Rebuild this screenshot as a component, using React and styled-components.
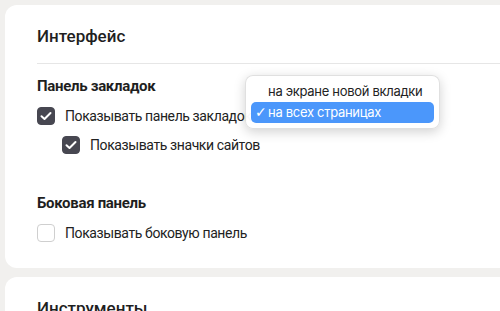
import React from 'react'
import styled, { createGlobalStyle } from 'styled-components'

const GlobalStyle = createGlobalStyle`
  html, body {
    margin: 0;
    padding: 0;
    background: #f1f0ee;
    overflow: hidden;
  }
  body {
    font-family: Roboto, "Noto Sans", sans-serif;
    color: #1f1f1f;
  }
`

const Page = styled.div`
  padding: 5px 0 0 5px;
  display: flex;
  flex-direction: column;
  gap: 9px;
`

const Card = styled.section`
  position: relative;
  width: 540px;
  background: #fff;
  border-radius: 12px;
  padding: 19px 0 21px 32px;
  box-sizing: border-box;
`

const Title = styled.h2`
  margin: 0;
  font-size: 17px;
  line-height: 24px;
  font-weight: 500;
  padding-bottom: 15px;
  border-bottom: 1px solid #e6e6e6;
`

const Section = styled.div`
  margin-top: ${props => props.first ? '12px' : '34px'};
`

const SectionTitle = styled.h3`
  margin: 0 0 5px;
  font-size: 15px;
  line-height: 20px;
  font-weight: 700;
  letter-spacing: -0.3px;
`

const Row = styled.label`
  display: flex;
  align-items: center;
  gap: 10px;
  height: 29px;
  padding-left: ${props => props.nested ? '25px' : '0'};
  font-size: 14px;
  letter-spacing: -0.4px;
  color: #222;
`

const Box = styled.span`
  width: 18px;
  height: 18px;
  box-sizing: border-box;
  border-radius: 4px;
  display: flex;
  align-items: center;
  justify-content: center;
  background: ${props => props.checked ? '#474751' : '#fff'};
  border: 1px solid ${props => props.checked ? '#474751' : '#cfcfcf'};
`

const Menu = styled.div`
  position: absolute;
  left: 240px;
  top: 70px;
  width: 195px;
  box-sizing: border-box;
  padding: 5px;
  background: rgba(255, 255, 255, 0.97);
  border: 1px solid rgba(0, 0, 0, 0.12);
  border-radius: 8px;
  box-shadow: 0 3px 12px rgba(0, 0, 0, 0.18);
  font-family: Inter, "Noto Sans", sans-serif;
`

const MenuItem = styled.div`
  position: relative;
  height: 21px;
  line-height: 21px;
  padding-left: 17px;
  border-radius: 5px;
  font-size: 13px;
  letter-spacing: -0.3px;
  white-space: nowrap;
  color: ${props => props.active ? '#fff' : '#222'};
  background: ${props => props.active ? '#4b97fb' : 'transparent'};
`

const Tick = styled.span`
  position: absolute;
  left: 4px;
  top: 0;
  font-size: 14px;
  font-family: "DejaVu Sans", sans-serif;
`

const Check = () => (
  <svg width="12" height="10" viewBox="0 0 12 10">
    <path d="M1.5 5.2 L4.5 8 L10.5 2" fill="none" stroke="#fff" strokeWidth="2"
      strokeLinecap="round" strokeLinejoin="round" />
  </svg>
)

const Checkbox = ({ checked, nested, children }) => (
  <Row nested={nested}>
    <Box checked={checked}>{checked && <Check />}</Box>
    {children}
  </Row>
)

const App = () => (
  <>
    <GlobalStyle />
    <Page>
      <Card>
        <Title>Интерфейс</Title>
        <Section first>
          <SectionTitle>Панель закладок</SectionTitle>
          <Checkbox checked>Показывать панель закладок</Checkbox>
          <Checkbox checked nested>Показывать значки сайтов</Checkbox>
        </Section>
        <Section>
          <SectionTitle>Боковая панель</SectionTitle>
          <Checkbox>Показывать боковую панель</Checkbox>
        </Section>
        <Menu>
          <MenuItem>на экране новой вкладки</MenuItem>
          <MenuItem active><Tick>✓</Tick>на всех страницах</MenuItem>
        </Menu>
      </Card>
      <Card>
        <Title>Инструменты</Title>
      </Card>
    </Page>
  </>
)

export default App
